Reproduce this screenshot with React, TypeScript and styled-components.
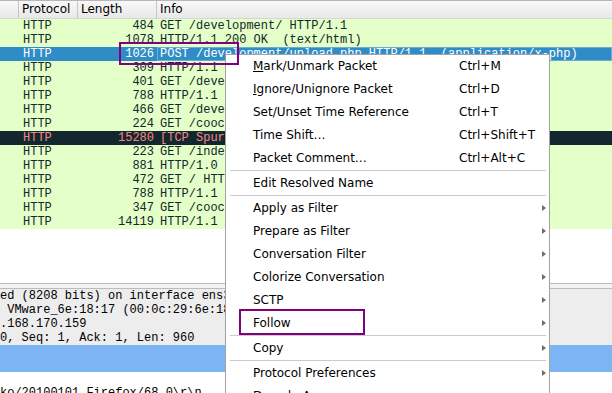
import React from "react";
import styled, { createGlobalStyle } from "styled-components";

const GlobalStyle = createGlobalStyle`
  html, body { margin: 0; padding: 0; background: #ffffff; overflow: hidden; }
  #root { width: 612px; height: 393px; }
`;

const Screen = styled.div`
  position: relative;
  width: 612px;
  height: 393px;
  overflow: hidden;
  display: flex;
  flex-direction: column;
  background: #ffffff;
  font-family: "DejaVu Sans", sans-serif;
`;

const Header = styled.div`
  display: grid;
  grid-template-columns: 19px 59px 79px 1fr;
  height: 19px;
  flex: none;
  box-sizing: border-box;
  border-top: 1px solid #b7b7b7;
  border-bottom: 1px solid #d6d6d6;
  background: linear-gradient(#f8f8f8, #e8e8e8);
  font-size: 12px;
  color: #000;
`;

const HeaderCell = styled.div`
  border-right: 1px solid #c6c6c6;
  padding-left: 3px;
  line-height: 17px;
  white-space: nowrap;
  overflow: hidden;
  &:last-child { border-right: none; }
`;

type Tone = "normal" | "selected" | "bad";

const Row = styled.div<{ $tone: Tone }>`
  display: grid;
  grid-template-columns: 19px 59px 79px 1fr;
  height: 14px;
  flex: none;
  font-family: "Liberation Mono", monospace;
  font-size: 12px;
  line-height: 14px;
  background: ${(p) => (p.$tone === "selected" ? "#308cc6" : p.$tone === "bad" ? "#12272e" : "#e4ffc7")};
  color: ${(p) => (p.$tone === "selected" ? "#ffffff" : p.$tone === "bad" ? "#f78787" : "#12272e")};
`;

const Cell = styled.div`
  white-space: pre;
  overflow: hidden;
`;

const ProtoCell = styled(Cell)`
  padding-left: 4px;
`;

const LenCell = styled(Cell)`
  text-align: right;
  padding-right: 3px;
`;

const InfoCell = styled(Cell)<{ $focus?: boolean }>`
  padding-left: 3px;
  box-shadow: ${(p) => (p.$focus ? "inset 0 0 0 1px rgba(255,255,255,0.28)" : "none")};
`;

const EmptyArea = styled.div`
  height: 54px;
  flex: none;
  background: #ffffff;
`;

const Splitter = styled.div`
  height: 6px;
  flex: none;
  box-sizing: border-box;
  border-top: 1px solid #bcbcbc;
  border-bottom: 1px solid #bcbcbc;
  background: #f3f3f3;
`;

const Details = styled.div`
  flex: 1;
  display: flex;
  flex-direction: column;
  font-family: "Liberation Mono", monospace;
  font-size: 12px;
  line-height: 14px;
  color: #000;
`;

const DetailBlock = styled.div<{ $bg: string }>`
  background: ${(p) => p.$bg};
`;

const DetailLine = styled.div`
  height: 14px;
  white-space: pre;
  overflow: hidden;
`;

const SelectedBand = styled.div`
  height: 27px;
  flex: none;
  background: #7db4f4;
`;

const BytesArea = styled.div`
  padding-top: 14px;
  background: #ffffff;
`;

const Menu = styled.div`
  position: absolute;
  left: 225px;
  top: 54px;
  width: 325px;
  box-sizing: border-box;
  background: #ffffff;
  border: 1px solid #a2a2a2;
  font-family: "DejaVu Sans", sans-serif;
  font-size: 12px;
  color: #000;
`;

const MenuItem = styled.div`
  display: grid;
  grid-template-columns: 206px 1fr 8px;
  align-items: center;
  box-sizing: border-box;
  height: 23px;
  padding: 0 3px 2px 27px;
  white-space: nowrap;
`;

const Mnemonic = styled.span`
  text-decoration: underline;
`;

const Arrow = styled.span`
  justify-self: end;
  width: 0;
  height: 0;
  margin-top: 1px;
  border-top: 3.5px solid transparent;
  border-bottom: 3.5px solid transparent;
  border-left: 4px solid #6e6e6e;
`;

const Separator = styled.div`
  height: 1px;
  margin: 0 3px 1px 4px;
  background: #cbcbcb;
`;

const Annotation = styled.div<{ $x: number; $y: number; $w: number; $h: number }>`
  position: absolute;
  left: ${(p) => p.$x}px;
  top: ${(p) => p.$y}px;
  width: ${(p) => p.$w}px;
  height: ${(p) => p.$h}px;
  box-sizing: border-box;
  border: 2px solid #800080;
  pointer-events: none;
`;

type Packet = { len: string; info: string; tone: Tone };

const packets: Packet[] = [
  { len: "484", info: "GET /development/ HTTP/1.1", tone: "normal" },
  { len: "1078", info: "HTTP/1.1 200 OK  (text/html)", tone: "normal" },
  { len: "1026", info: "POST /development/upload.php HTTP/1.1  (application/x-php)", tone: "selected" },
  { len: "309", info: "HTTP/1.1 302 Found", tone: "normal" },
  { len: "401", info: "GET /development/ HTTP/1.1", tone: "normal" },
  { len: "788", info: "HTTP/1.1 200 OK  (text/html)", tone: "normal" },
  { len: "466", info: "GET /development/uploads/ HTTP/1.1", tone: "normal" },
  { len: "224", info: "GET /coockie.php HTTP/1.1", tone: "normal" },
  { len: "15280", info: "[TCP Spurious Retransmission] HTTP/1.1", tone: "bad" },
  { len: "223", info: "GET /index.php HTTP/1.1", tone: "normal" },
  { len: "881", info: "HTTP/1.0 200 OK  (text/html)", tone: "normal" },
  { len: "472", info: "GET / HTTP/1.1", tone: "normal" },
  { len: "788", info: "HTTP/1.1 200 OK  (text/html)", tone: "normal" },
  { len: "347", info: "GET /coockie.php HTTP/1.1", tone: "normal" },
  { len: "14119", info: "HTTP/1.1 200 OK  (text/html)", tone: "normal" },
];

const detailLines = [
  "ed (8208 bits) on interface ens33, id 0",
  " VMware_6e:18:17 (00:0c:29:6e:18:17)",
  ".168.170.159",
  "0, Seq: 1, Ack: 1, Len: 960",
];

type Entry =
  | { kind: "sep" }
  | { kind: "item"; label: React.ReactNode; shortcut?: string; sub?: boolean };

const menu: Entry[] = [
  { kind: "item", label: <><Mnemonic>M</Mnemonic>ark/Unmark Packet</>, shortcut: "Ctrl+M" },
  { kind: "item", label: <><Mnemonic>I</Mnemonic>gnore/Unignore Packet</>, shortcut: "Ctrl+D" },
  { kind: "item", label: "Set/Unset Time Reference", shortcut: "Ctrl+T" },
  { kind: "item", label: "Time Shift…", shortcut: "Ctrl+Shift+T" },
  { kind: "item", label: "Packet Comment…", shortcut: "Ctrl+Alt+C" },
  { kind: "sep" },
  { kind: "item", label: "Edit Resolved Name" },
  { kind: "sep" },
  { kind: "item", label: "Apply as Filter", sub: true },
  { kind: "item", label: "Prepare as Filter", sub: true },
  { kind: "item", label: "Conversation Filter", sub: true },
  { kind: "item", label: "Colorize Conversation", sub: true },
  { kind: "item", label: "SCTP", sub: true },
  { kind: "item", label: "Follow", sub: true },
  { kind: "sep" },
  { kind: "item", label: "Copy", sub: true },
  { kind: "sep" },
  { kind: "item", label: "Protocol Preferences", sub: true },
  { kind: "item", label: "Decode As…" },
  { kind: "item", label: "Print…" },
];

export default function App() {
  return (
    <>
      <GlobalStyle />
      <Screen>
        <Header>
          <HeaderCell />
          <HeaderCell>Protocol</HeaderCell>
          <HeaderCell>Length</HeaderCell>
          <HeaderCell>Info</HeaderCell>
        </Header>
        {packets.map((p, i) => (
          <Row key={i} $tone={p.tone}>
            <Cell />
            <ProtoCell>HTTP</ProtoCell>
            <LenCell>{p.len}</LenCell>
            <InfoCell $focus={p.tone === "selected"}>{p.info}</InfoCell>
          </Row>
        ))}
        <EmptyArea />
        <Splitter />
        <Details>
          <DetailBlock $bg="#ededed">
            {detailLines.map((l, i) => (
              <DetailLine key={i}>{l}</DetailLine>
            ))}
          </DetailBlock>
          <SelectedBand />
          <BytesArea>
            <DetailLine>{"ko/20100101 Firefox/68.0\\r\\n"}</DetailLine>
          </BytesArea>
        </Details>
        <Menu>
          {menu.map((e, i) =>
            e.kind === "sep" ? (
              <Separator key={i} />
            ) : (
              <MenuItem key={i}>
                <span>{e.label}</span>
                <span>{e.shortcut ?? ""}</span>
                {e.sub ? <Arrow /> : <span />}
              </MenuItem>
            )
          )}
        </Menu>
        <Annotation $x={119} $y={42} $w={120} $h={23} />
        <Annotation $x={239} $y={309} $w={126} $h={26} />
      </Screen>
    </>
  );
}
